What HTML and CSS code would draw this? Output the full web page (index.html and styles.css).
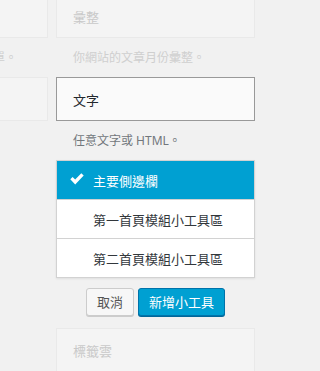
FILE: index.html
```html
<!DOCTYPE html>
<html lang="zh-TW">
<head>
    <meta charset="UTF-8">
    <meta name="viewport" content="width=device-width, initial-scale=1.0">
    <title>小工具</title>
    <link rel="stylesheet" href="styles.css">
</head>
<body>
    <div class="widgets">
        <div class="column column--left">
            <div class="widget faded">
                <div class="widget__top"></div>
                <p class="widget__desc">在側邊欄中新增自訂選單。</p>
            </div>
            <div class="widget faded">
                <div class="widget__top"></div>
                <p class="widget__desc"></p>
            </div>
        </div>

        <div class="column">
            <div class="widget faded">
                <div class="widget__top"><h3>彙整</h3></div>
                <p class="widget__desc">你網站的文章月份彙整。</p>
            </div>

            <div class="widget">
                <div class="widget__top widget__top--active"><h3>文字</h3></div>
                <p class="widget__desc">任意文字或 HTML。</p>
            </div>

            <ul class="chooser">
                <li class="chooser__item selected">
                    <svg class="check" width="14" height="12" viewBox="0 0 14 12">
                        <path d="M0.3 6.3 L2.6 4 L5.2 6.6 L11.3 0.2 L13.7 2.5 L5.2 11.4 Z" fill="#fff"/>
                    </svg>
                    主要側邊欄
                </li>
                <li class="chooser__item">第一首頁模組小工具區</li>
                <li class="chooser__item">第二首頁模組小工具區</li>
            </ul>

            <div class="chooser__actions">
                <button class="button">取消</button>
                <button class="button button--primary">新增小工具</button>
            </div>

            <div class="widget faded">
                <div class="widget__top"><h3>標籤雲</h3></div>
            </div>
        </div>
    </div>
</body>
</html>
```

FILE: styles.css
```css
body {
    margin: 0;
    background: #f1f1f1;
    font-family: "Noto Sans", "Noto Sans CJK TC", sans-serif;
    font-size: 13px;
    color: #32373c;
    overflow: hidden;
}

.widgets {
    display: flex;
    gap: 8px;
    margin-left: -151px;
    margin-top: -6px;
}

.column {
    width: 199px;
    flex: none;
}

.widget__top {
    height: 42px;
    border: 1px solid #e9e9e9;
    background: #f4f4f4;
    box-sizing: content-box;
}

.widget__top h3 {
    margin: 0;
    padding: 12px 16px 10px;
    font-size: 13px;
    font-weight: normal;
    line-height: 20px;
}

.widget__top--active {
    border-color: #999;
    background: #fafafa;
    color: #23282d;
}

.widget__desc {
    margin: 0;
    padding: 0 17px;
    height: 39px;
    line-height: 39px;
    font-size: 12px;
    color: #72777c;
    white-space: nowrap;
}

.column--left .widget__desc {
    text-align: right;
    padding-right: 31px;
}

.faded .widget__top {
    color: #c9c9c9;
}

.faded .widget__desc {
    color: #cfcfcf;
}

/* sidebar chooser */
.chooser {
    list-style: none;
    margin: 0;
    padding: 0;
    border: 1px solid #d2d2d2;
    background: #fff;
    box-shadow: 0 1px 2px rgba(0, 0, 0, 0.08);
}

.chooser__item {
    display: flex;
    align-items: center;
    height: 38px;
    padding-left: 36px;
    border-top: 1px solid #d2d2d2;
    color: #32373c;
    position: relative;
}

.chooser__item:first-child {
    border-top: 0;
}

.chooser__item.selected {
    background: #00a0d2;
    color: #fff;
}

.check {
    position: absolute;
    left: 13px;
    top: 12px;
}

.chooser__actions {
    display: flex;
    justify-content: center;
    gap: 4px;
    margin: 10px 0 12px;
}

.button {
    height: 28px;
    padding: 0 10px;
    border: 1px solid #ccc;
    border-radius: 3px;
    background: #f7f7f7;
    box-shadow: 0 1px 0 #ccc;
    color: #555;
    font-family: inherit;
    font-size: 13px;
    line-height: 26px;
}

.button--primary {
    background: #00a0d2;
    border-color: #0073aa;
    box-shadow: 0 1px 0 #006799;
    color: #fff;
}
```
